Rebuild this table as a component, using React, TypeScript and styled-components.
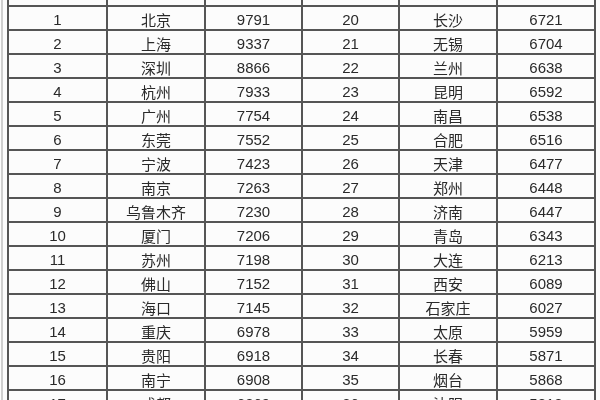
import React from 'react'
import styled, { createGlobalStyle } from 'styled-components'

const GlobalStyle = createGlobalStyle`
  html, body {
    margin: 0;
    padding: 0;
    background: #ffffff;
  }
  body {
    font-family: "Liberation Sans", "Noto Sans CJK SC", sans-serif;
  }
`

// Whole picture, clipped like a cropped screenshot
const Frame = styled.div`
  width: 600px;
  height: 400px;
  overflow: hidden;
  display: flex;
  align-items: flex-start;
  background: #fcfcfc;
  filter: blur(0.35px);
`

// Faint outer rule at the very left edge
const EdgeRule = styled.div`
  flex-shrink: 0;
  width: 2px;
  height: 100%;
  margin-left: 1px;
  margin-right: 4px;
  background: #cfcfcf;
`

const Table = styled.div`
  display: grid;
  grid-template-columns: 99px 98px 97px 97px 98px 98px;
  grid-template-rows: 7px;
  grid-auto-rows: 24px;
  border-left: 2px solid #555;
  flex-shrink: 0;
`

const HeadCell = styled.div`
  box-sizing: border-box;
  display: flex;
  align-items: flex-end;
  justify-content: center;
  overflow: hidden;
  border-right: 2px solid #555;
  border-bottom: 2px solid #555;
  font-size: 15px;
  line-height: 15px;
  color: #b4b4b4;
  padding-bottom: 5px;
`

const Cell = styled.div`
  box-sizing: border-box;
  display: flex;
  align-items: center;
  justify-content: center;
  padding-top: 2px;
  border-right: 2px solid #555;
  border-bottom: 2px solid #555;
  font-size: 15px;
  color: #2a2a2a;
  white-space: nowrap;
`

type Row = [string, string, string, string, string, string]

const rows: Row[] = [
  ['1', '北京', '9791', '20', '长沙', '6721'],
  ['2', '上海', '9337', '21', '无锡', '6704'],
  ['3', '深圳', '8866', '22', '兰州', '6638'],
  ['4', '杭州', '7933', '23', '昆明', '6592'],
  ['5', '广州', '7754', '24', '南昌', '6538'],
  ['6', '东莞', '7552', '25', '合肥', '6516'],
  ['7', '宁波', '7423', '26', '天津', '6477'],
  ['8', '南京', '7263', '27', '郑州', '6448'],
  ['9', '乌鲁木齐', '7230', '28', '济南', '6447'],
  ['10', '厦门', '7206', '29', '青岛', '6343'],
  ['11', '苏州', '7198', '30', '大连', '6213'],
  ['12', '佛山', '7152', '31', '西安', '6089'],
  ['13', '海口', '7145', '32', '石家庄', '6027'],
  ['14', '重庆', '6978', '33', '太原', '5959'],
  ['15', '贵阳', '6918', '34', '长春', '5871'],
  ['16', '南宁', '6908', '35', '烟台', '5868'],
  ['17', '成都', '6869', '36', '沈阳', '5813'],
]

const heads = ['排名', '城市', '平均月薪', '排名', '城市', '平均月薪']

export default function App() {
  return (
    <>
      <GlobalStyle />
      <Frame>
        <EdgeRule />
        <Table>
          {heads.map((h, i) => (
            <HeadCell key={'h' + i}>{h}</HeadCell>
          ))}
          {rows.map((r, ri) =>
            r.map((v, ci) => <Cell key={ri + '-' + ci}>{v}</Cell>)
          )}
        </Table>
      </Frame>
    </>
  )
}
